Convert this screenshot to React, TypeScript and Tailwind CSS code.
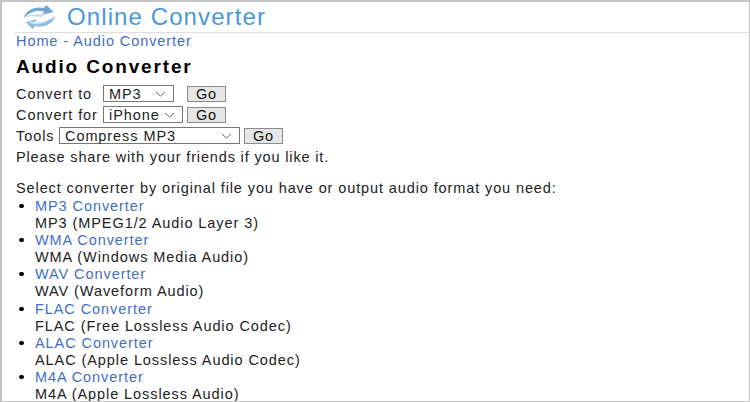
const items = [
  ["MP3 Converter", "MP3 (MPEG1/2 Audio Layer 3)"],
  ["WMA Converter", "WMA (Windows Media Audio)"],
  ["WAV Converter", "WAV (Waveform Audio)"],
  ["FLAC Converter", "FLAC (Free Lossless Audio Codec)"],
  ["ALAC Converter", "ALAC (Apple Lossless Audio Codec)"],
  ["M4A Converter", "M4A (Apple Lossless Audio)"],
];

const Logo = () => (
  <svg width="37" height="24" viewBox="0 0 36 24" className="shrink-0">
    <path d="M2 13C5 5 13 1 22 3l3-3 7 7-12 3 3-3C16 4 9 7 2 13z" fill="#6fa8d6" />
    <path d="M2 13c6-3 13-5 20-3l-2 2c-6-1-12-1-18 1z" fill="#c3dcef" />
    <path d="M34 11c-3 8-11 12-20 10l-3 3-7-7 12-3-3 3c7 2 14-1 21-6z" fill="#8fbde0" />
    <path d="M6 16c8 2 17 1 24-3-5 5-13 7-19 6z" fill="#d5e6f3" />
  </svg>
);

const Picker = ({ value, width }: { value: string; width: string }) => (
  <div className={`flex h-[17px] items-center justify-between border border-[#767676] bg-white pl-[5px] pr-[7px] ${width}`}>
    <span>{value}</span>
    <svg width="11" height="6" viewBox="0 0 11 6" fill="none" stroke="#666" strokeWidth="1">
      <path d="M1 1l4.5 4L10 1" />
    </svg>
  </div>
);

const GoButton = () => (
  <div className="flex h-[16px] w-[39px] items-center justify-center border border-[#8a8a8a] bg-[#e6e6e6] text-[#111]">
    Go
  </div>
);

export default function App() {
  return (
    <div className="h-[402px] w-[750px] overflow-hidden border-2 border-r-[1px] border-b-[1px] border-[#c4c4c4] bg-white font-['Liberation_Sans',Arial,sans-serif] text-[14.5px] leading-[16px] tracking-[0.92px] text-[#222]">
      <div className="ml-[12px] flex h-[31px] items-center gap-[9px] border-b border-[#dedede] pl-[7px]">
        <Logo />
        <span className="text-[24px] tracking-[1.1px] text-[#4a98d8]">Online Converter</span>
      </div>

      <div className="px-[14px]">
        <div className="text-[#3f6fc4]">Home - Audio Converter</div>
        <h1 className="mt-[8px] text-[19px] leading-[20px] font-bold tracking-[1.85px] text-black">Audio Converter</h1>

        <div className="mt-[8px] flex flex-col gap-[4px]">
          <div className="flex items-center">
            <span className="w-[87px]">Convert to</span>
            <Picker value="MP3" width="w-[71px]" />
            <span className="ml-[13px]"><GoButton /></span>
          </div>
          <div className="flex items-center">
            <span className="w-[87px]">Convert for</span>
            <Picker value="iPhone" width="w-[80px]" />
            <span className="ml-[4px]"><GoButton /></span>
          </div>
          <div className="flex items-center">
            <span className="w-[43px]">Tools</span>
            <Picker value="Compress MP3" width="w-[181px]" />
            <span className="ml-[4px]"><GoButton /></span>
          </div>
        </div>

        <p className="mt-[5px] tracking-[0.85px]">Please share with your friends if you like it.</p>
        <p className="mt-[15px] tracking-[0.89px]">Select converter by original file you have or output audio format you need:</p>

        <ul className="mt-[2px]">
          {items.map(([name, desc]) => (
            <li key={name} className="relative h-[34.2px] pl-[19px]">
              <span className="absolute left-[3px] top-[6px] h-[4px] w-[5px] rounded-full bg-black" />
              <div className="text-[#3f6fc4]">{name}</div>
              <div className="mt-[1px]">{desc}</div>
            </li>
          ))}
        </ul>
      </div>
    </div>
  );
}
